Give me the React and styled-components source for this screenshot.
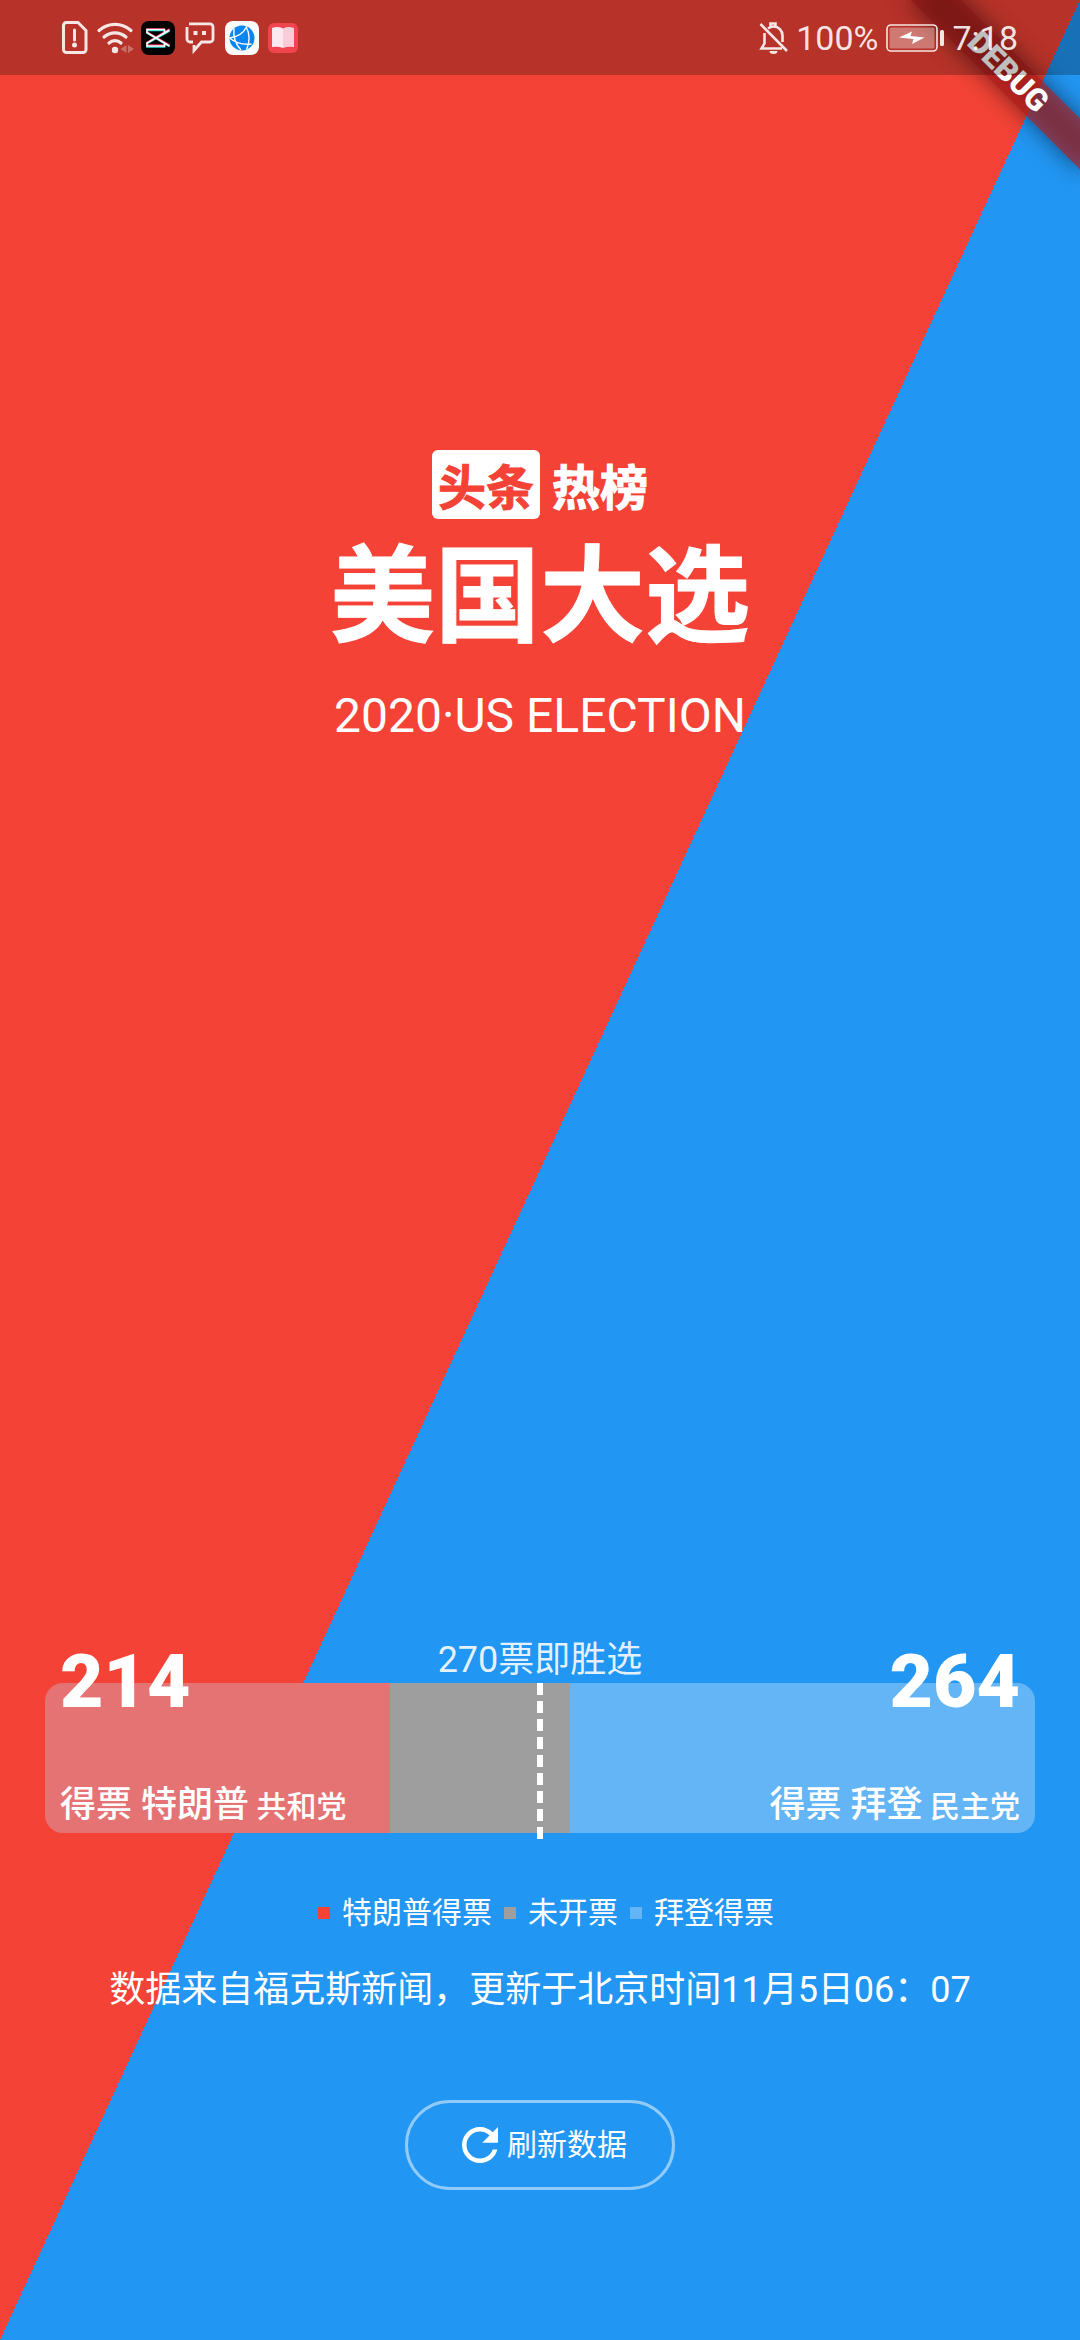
import React from "react";
import styled, { createGlobalStyle } from "styled-components";

const GlobalStyle = createGlobalStyle`
  * { box-sizing: border-box; }
  body { margin: 0; background: #2196f3; }
`;

const Page = styled.div`
  position: relative;
  overflow: hidden;
  min-height: 100vh;
  display: flex;
  flex-direction: column;
  color: #fff;
  font-family: Roboto, "Noto Sans CJK SC", sans-serif;
  background: linear-gradient(to bottom right, #f44336 50%, #2196f3 50%);
`;

const StatusBar = styled.header`
  position: relative;
  z-index: 2;
  height: 75px;
  flex: none;
  padding: 0 62px;
  display: flex;
  align-items: center;
  justify-content: space-between;
  background: rgba(0, 0, 0, 0.25);
`;

const StatusGroup = styled.div`
  display: flex;
  align-items: center;
  gap: ${(p) => p.$gap}px;
`;

const StatusText = styled.span`
  font-size: 34px;
  line-height: 40px;
  color: rgba(255, 255, 255, 0.88);
`;

const Icon = styled.svg`
  display: block;
  flex: none;
  overflow: visible;
`;

const DebugBanner = styled.div`
  position: absolute;
  z-index: 1;
  top: 54px;
  right: -48px;
  width: 240px;
  height: 36px;
  transform: rotate(45deg);
  text-align: center;
  font-size: 31px;
  line-height: 36px;
  font-weight: 900;

  &::before,
  &::after {
    content: "";
    position: absolute;
    inset: 0;
  }

  &::before {
    z-index: -2;
    background: rgba(0, 0, 0, 0.5);
    filter: blur(12px);
  }

  &::after {
    z-index: -1;
    background: rgba(183, 28, 28, 0.63);
  }
`;

const Hero = styled.section`
  padding-top: 375px;
  display: flex;
  flex-direction: column;
  align-items: center;
`;

const Brand = styled.div`
  display: flex;
  gap: 12px;
  font-size: 48px;
  line-height: 61px;
  font-weight: 700;
  -webkit-text-stroke: 1px currentColor;
`;

const BrandName = styled.span`
  padding-top: 8px;
`;

const BrandTag = styled(BrandName)`
  padding-left: 6px;
  padding-right: 6px;
  border-radius: 6px;
  background: #fff;
  color: #f44336;
`;

const Title = styled.h1`
  margin: 3px 0 0;
  font-size: 105px;
  line-height: 152px;
  font-weight: 700;
  -webkit-text-stroke: 1px currentColor;
`;

const Subtitle = styled.p`
  margin: 14px 0 0;
  font-size: 48px;
  line-height: 56px;
`;

const Results = styled.section`
  margin-top: auto;
  padding: 0 45px 150px;
  display: flex;
  flex-direction: column;
  align-items: center;
`;

const Threshold = styled.p`
  margin: 0;
  font-size: 36px;
  line-height: 46px;
  color: rgba(255, 255, 255, 0.88);
`;

const VoteBar = styled.div`
  position: relative;
  width: 100%;
  height: 150px;
`;

const Track = styled.div`
  display: flex;
  height: 100%;
  border-radius: 18px;
  overflow: hidden;
`;

const Segment = styled.div`
  flex: ${(p) => p.$share} 0 0;
  background: ${(p) => p.$color};
`;

const WinLine = styled.div`
  position: absolute;
  top: 0;
  left: 50%;
  width: 6px;
  height: 156px;
  margin-left: -3px;
  background: repeating-linear-gradient(#fff 0 12px, transparent 12px 18px);
`;

const Tallies = styled.div`
  position: absolute;
  inset: -39px 15px 0;
  display: flex;
  justify-content: space-between;
`;

const Tally = styled.div`
  display: flex;
  flex-direction: column;
  justify-content: space-between;
  align-items: ${(p) => p.$align};
  font-weight: 500;
`;

const Count = styled.strong`
  font-size: 75px;
  line-height: 75px;
  font-weight: 900;
`;

const Candidate = styled.span`
  font-size: 36px;
  line-height: 52px;
  white-space: pre;
`;

const Party = styled.span`
  font-size: 30px;
`;

const Legend = styled.ul`
  margin: 58px 0 0;
  padding: 0 0 0 12px;
  list-style: none;
  display: flex;
  gap: 12px;
  font-size: 30px;
  line-height: 44px;
`;

const LegendItem = styled.li`
  display: flex;
  align-items: center;
  gap: 12px;
`;

const Swatch = styled.span`
  width: 12px;
  height: 12px;
  background: ${(p) => p.$color};
`;

const Source = styled.p`
  margin: 29px 0 0;
  font-size: 36px;
  line-height: 52px;
`;

const RefreshButton = styled.button`
  margin-top: 84px;
  width: 270px;
  height: 90px;
  padding: 0;
  display: flex;
  align-items: center;
  justify-content: center;
  border: 3px solid rgba(255, 255, 255, 0.5);
  border-radius: 45px;
  background: transparent;
  color: #fff;
  font-family: inherit;
  font-size: 30px;
  line-height: 44px;
  cursor: pointer;
`;

const ink = "rgba(255,255,255,0.88)";

const SimIcon = () => (
  <Icon width="26" height="33" viewBox="0 0 26 33" fill="none" stroke={ink} strokeWidth="3">
    <path d="M4.500 1.500H16l8 8v19a3 3 0 0 1-3 3H4.500a3 3 0 0 1-3-3v-24a3 3 0 0 1 3-3z" />
    <path d="M12.500 9v10" strokeLinecap="round" />
    <circle cx="12.500" cy="24" r="2.500" fill={ink} stroke="none" />
  </Icon>
);

const WifiIcon = () => (
  <Icon width="35" height="32" viewBox="0 0 35 32" fill="none" stroke={ink} strokeWidth="3.200" strokeLinecap="round">
    <path d="M2 8.500a24 24 0 0 1 32 0M7 15a16.500 16.500 0 0 1 22 0M12 21a9 9 0 0 1 12 0" />
    <circle cx="18" cy="28" r="3.200" fill={ink} stroke="none" />
    <path d="M23.500 27l6-4v8zM37 27l-6-4v8z" fill="rgba(255,255,255,0.3)" stroke="none" />
  </Icon>
);

const CutIcon = () => (
  <Icon width="34" height="34" viewBox="0 0 34 34" fill="none" strokeWidth="1.600">
    <rect width="34" height="34" rx="8" fill="#000" />
    <path d="M28.500 10L6 22.500V26h17.500v-2.500M28.500 25.500L6 12V9.500h17.500v2" stroke="#2fe0e0" />
    <path d="M28.500 8L6 21.500V24h17.500M28.500 24L6 11V8h17.500" stroke="#f0265c" />
    <path d="M28.500 9L6 22v3h17.500v-2.500M28.500 25L6 11.500V8.500h17.500V11" stroke="#fff" />
  </Icon>
);

const ChatIcon = () => (
  <Icon width="32" height="31" viewBox="-1 0 32 31" fill="none" stroke={ink} strokeWidth="2.800">
    <path d="M4 1.900H25a3 3 0 0 1 3 3V17a3 3 0 0 1-3 3H16.500L9 28.500V23" />
    <path d="M2 5v12a3 3 0 0 0 3 3h3" />
    <path d="M8.500 9h4v4h-4zM17 9h4v4h-4z" fill={ink} stroke="none" />
  </Icon>
);

const BrowserIcon = () => (
  <Icon width="34" height="34" viewBox="0 0 34 34" fill="none">
    <rect width="34" height="34" rx="8" fill="#fafafa" />
    <circle cx="17" cy="17" r="12.500" fill="#0a84f0" />
    <path d="M4.500 17c8-1 14-5 17-11M21 5.500c4 7 4 16 .500 23M4.500 17c6 5 13 7 22 6M9 7.500c-1 8 1 15 7 21.500" stroke="#fff" strokeWidth="1.400" />
  </Icon>
);

const BookIcon = () => (
  <Icon width="30" height="30" viewBox="0 0 30 30">
    <rect width="30" height="30" rx="6" fill="#f0444e" />
    <path d="M4 5q6-2 11 .500V25q-5-2-11-1z" fill="#fde8ef" />
    <path d="M26 5q-6-2-11 .500V25q5-2 11-1z" fill="#f8cdd8" />
  </Icon>
);

const BellOffIcon = () => (
  <Icon width="29" height="32" viewBox="0 0 29 32" fill="none" stroke={ink} strokeWidth="2.600">
    <path d="M1.500 2l26.500 27" />
    <path d="M9 6.500C11 5 13 4.500 14.500 4.500c5 0 9 4 9 9V20M5.500 11v10.500L2.500 26.500H23M11.500 4V1.500h5V5" />
    <path d="M10.500 29h8a4 3 0 0 1-8 0z" fill={ink} stroke="none" />
  </Icon>
);

const BatteryIcon = () => (
  <Icon width="58" height="28" viewBox="0 0 58 28">
    <rect x="1" y="1" width="50" height="26" rx="4" fill="none" stroke={ink} strokeWidth="1.600" />
    <rect x="3.500" y="3.500" width="45" height="21" rx="1.500" fill="rgba(255,255,255,0.35)" />
    <path d="M13 13.500L26 7.500l-1.500 4.500 14 1.500L26 20l1.500-5z" fill="#fff" />
    <rect x="54" y="6" width="4" height="16" rx="1.500" fill={ink} />
  </Icon>
);

const RefreshIcon = () => (
  <Icon width="54" height="54" viewBox="0 0 24 24" fill="currentColor">
    <path d="M17.650 6.350C16.200 4.900 14.210 4 12 4c-4.420 0-7.990 3.580-7.990 8s3.570 8 7.990 8c3.730 0 6.840-2.550 7.730-6h-2.080c-.820 2.330-3.040 4-5.650 4-3.310 0-6-2.690-6-6s2.690-6 6-6c1.660 0 3.140.690 4.220 1.780L13 11h7V4l-2.350 2.350z" />
  </Icon>
);

const segments = [
  { name: "特朗普得票", share: 23, color: "#e57373", legend: "#f44336" },
  { name: "未开票", share: 12, color: "#9e9e9e", legend: "#9e9e9e" },
  { name: "拜登得票", share: 31, color: "#64b5f6", legend: "#64b5f6" },
];

const candidates = [
  { votes: 214, name: "特朗普", party: "共和党", align: "flex-start" },
  { votes: 264, name: "拜登", party: "民主党", align: "flex-end" },
];

export default function App() {
  return (
    <Page lang="zh-CN">
      <GlobalStyle />
      <DebugBanner>DEBUG</DebugBanner>
      <StatusBar>
        <StatusGroup $gap={9}>
          <SimIcon />
          <WifiIcon />
          <CutIcon />
          <ChatIcon />
          <BrowserIcon />
          <BookIcon />
        </StatusGroup>
        <StatusGroup $gap={8}>
          <BellOffIcon />
          <StatusText>100%</StatusText>
          <BatteryIcon />
          <StatusText>7:18</StatusText>
        </StatusGroup>
      </StatusBar>

      <Hero>
        <Brand>
          <BrandTag>头条</BrandTag>
          <BrandName>热榜</BrandName>
        </Brand>
        <Title>美国大选</Title>
        <Subtitle>2020·US ELECTION</Subtitle>
      </Hero>

      <Results>
        <Threshold>270票即胜选</Threshold>
        <VoteBar>
          <Track>
            {segments.map((s) => (
              <Segment key={s.name} $share={s.share} $color={s.color} />
            ))}
          </Track>
          <WinLine />
          <Tallies>
            {candidates.map((c) => (
              <Tally key={c.name} $align={c.align}>
                <Count>{c.votes}</Count>
                <Candidate>
                  得票 {c.name}
                  <Party> {c.party}</Party>
                </Candidate>
              </Tally>
            ))}
          </Tallies>
        </VoteBar>
        <Legend>
          {segments.map((s) => (
            <LegendItem key={s.name}>
              <Swatch $color={s.legend} />
              {s.name}
            </LegendItem>
          ))}
        </Legend>
        <Source>数据来自福克斯新闻，更新于北京时间11月5日06：07</Source>
        <RefreshButton type="button">
          <RefreshIcon />
          刷新数据
        </RefreshButton>
      </Results>
    </Page>
  );
}
